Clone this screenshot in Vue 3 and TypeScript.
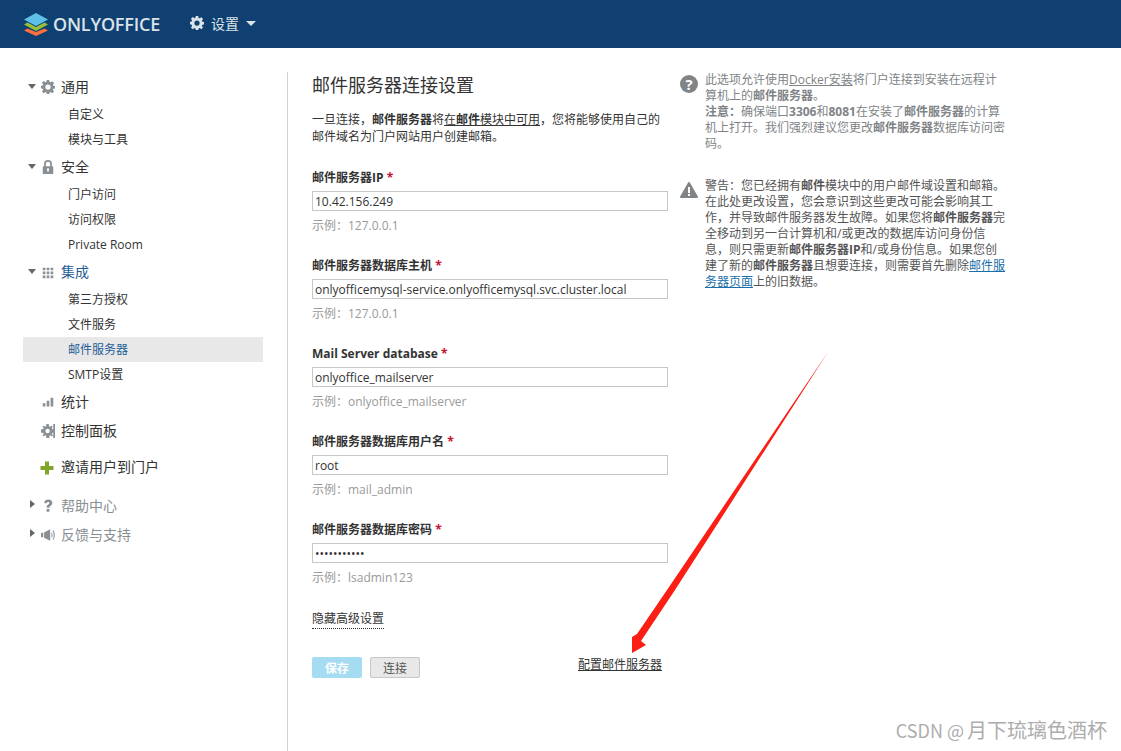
<script setup lang="ts">
interface NavItem {
  label: string
  icon: string
  arrow?: 'down' | 'right'
  blue?: boolean
  children?: { label: string; active?: boolean }[]
}

const nav: NavItem[] = [
  { label: '通用', icon: 'gear', arrow: 'down', children: [{ label: '自定义' }, { label: '模块与工具' }] },
  { label: '安全', icon: 'lock', arrow: 'down', children: [{ label: '门户访问' }, { label: '访问权限' }, { label: 'Private Room' }] },
  {
    label: '集成',
    icon: 'grid',
    arrow: 'down',
    blue: true,
    children: [{ label: '第三方授权' }, { label: '文件服务' }, { label: '邮件服务器', active: true }, { label: 'SMTP设置' }]
  },
  { label: '统计', icon: 'bars' },
  { label: '控制面板', icon: 'panel' }
]

const bottomNav: NavItem[] = [
  { label: '帮助中心', icon: 'help', arrow: 'right' },
  { label: '反馈与支持', icon: 'horn', arrow: 'right' }
]

const fields = [
  { label: '邮件服务器IP', value: '10.42.156.249', hint: '127.0.0.1', type: 'text' },
  { label: '邮件服务器数据库主机', value: 'onlyofficemysql-service.onlyofficemysql.svc.cluster.local', hint: '127.0.0.1', type: 'text' },
  { label: 'Mail Server database', value: 'onlyoffice_mailserver', hint: 'onlyoffice_mailserver', type: 'text' },
  { label: '邮件服务器数据库用户名', value: 'root', hint: 'mail_admin', type: 'text' },
  { label: '邮件服务器数据库密码', value: 'lsadmin1234', hint: 'lsadmin123', type: 'password' }
]
</script>

<template>
  <div class="page">
    <header class="top">
      <svg class="logo" width="26" height="23" viewBox="0 0 26 23">
        <path d="M4.500 15.500L13 19l8.500-3.500 3.500 2L13 23 1 17.500z" fill="#ff6f3d" />
        <path d="M4.500 9.500L13 14l8.500-4.500 3.500 2L13 18 1 11.500z" fill="#95c038" />
        <path d="M13 0l12 6.500L13 13 1 6.500z" fill="#5dc0e8" />
      </svg>
      <span class="brand">ONLYOFFICE</span>
      <div class="menu">
        <svg width="14" height="14" viewBox="0 0 16 16"><path fill="#dbe3ea" fill-rule="evenodd" d="M6.600 0h2.800l.4 2.200 1.200.5 1.900-1.300 2 2-1.300 1.900.5 1.200 2.200.4v2.800l-2.200.4-.5 1.200 1.300 1.800-2 2-1.900-1.300-1.200.5-.4 2.200H6.600l-.4-2.200-1.200-.5-1.900 1.300-2-2 1.300-1.800-.5-1.200L0 9.400V6.600l1.900-.4.5-1.200-1.300-1.800 2-2L5 2.500l1.200-.5zM8 5a3 3 0 100 6 3 3 0 000-6z" /></svg>
        <span>设置</span>
        <i class="caret"></i>
      </div>
    </header>

    <div class="body">
      <aside class="side">
        <template v-for="item in nav" :key="item.label">
          <div :class="['sec', { panel: item.icon === 'panel' }]">
            <i v-if="item.arrow" :class="['tri', item.arrow]"></i>
            <svg class="ico" width="14" height="14" viewBox="0 0 16 16" fill="#8a8f94">
              <path v-if="item.icon === 'gear'" fill-rule="evenodd" d="M6.600 0h2.800l.4 2.200 1.200.5 1.900-1.300 2 2-1.300 1.900.5 1.200 2.200.4v2.800l-2.200.4-.5 1.200 1.300 1.800-2 2-1.900-1.300-1.200.5-.4 2.200H6.600l-.4-2.200-1.200-.5-1.900 1.300-2-2 1.300-1.800-.5-1.200L0 9.400V6.600l1.900-.4.5-1.200-1.300-1.800 2-2L5 2.500l1.200-.5zM8 5a3 3 0 100 6 3 3 0 000-6z" />
              <path v-else-if="item.icon === 'lock'" fill-rule="evenodd" d="M8 0a4.500 4.500 0 014.500 4.500V7h.5a1 1 0 011 1v7a1 1 0 01-1 1H3a1 1 0 01-1-1V8a1 1 0 011-1h.5V4.500A4.500 4.500 0 018 0zm0 2a2.500 2.500 0 00-2.500 2.500V7h5V4.500A2.500 2.500 0 008 2zM7 9.500v3.500h2V9.500z" />
              <path v-else-if="item.icon === 'grid'" d="M2 3h3v3H2zM6.500 3h3v3h-3zM11 3h3v3h-3zM2 7.500h3v3H2zM6.500 7.500h3v3h-3zM11 7.500h3v3h-3zM2 12h3v3H2zM6.500 12h3v3h-3zM11 12h3v3h-3z" />
              <path v-else-if="item.icon === 'bars'" d="M2 9.500h3V13H2zM6.500 6.500h3V13h-3zM11 3h3v10h-3z" />
              <path v-else fill-rule="evenodd" d="M6 0h3v2.500l1.500.6 1.500-1.400 1.300 1.300L12.400 4.500l.6 1.500h1V0h2v16h-2v-6h-1l-.6 1.500 1.400 1.500-1.300 1.300-1.500-1.400-1.500.6V16H6v-2.500l-1.500-.6L3 14.300 1.700 13l1.400-1.500L2.500 10H0V6h2.500l.6-1.500L1.700 3 3 1.700l1.500 1.400L6 2.500zM7.500 5.500a2.500 2.500 0 100 5 2.500 2.500 0 000-5z" />
            </svg>
            <span :class="{ blue: item.blue }">{{ item.label }}</span>
          </div>
          <a
            v-for="sub in item.children"
            :key="sub.label"
            :class="['sub', { active: sub.active }]"
          >{{ sub.label }}</a>
        </template>

        <div class="sec invite">
          <svg class="plus" width="16" height="16" viewBox="0 0 16 16"><path fill="#7fa52b" d="M6 1.500h4V6h4.500v4H10v4.500H6V10H1.500V6H6z" /></svg>
          <span>邀请用户到门户</span>
        </div>

        <div class="lower">
          <div v-for="item in bottomNav" :key="item.label" class="sec muted">
            <i class="tri right"></i>
            <svg class="ico" width="14" height="14" viewBox="0 0 16 16" fill="#8a8f94">
              <path v-if="item.icon === 'help'" d="M3.500 4.500C4 1.800 5.800.5 8.300.5c2.800 0 4.700 1.500 4.700 3.800 0 1.800-.9 2.800-2.300 3.700-.9.600-1.100 1-1.100 2H6.500c0-1.800.4-2.800 1.700-3.600.9-.6 1.300-1 1.300-1.800 0-.8-.5-1.300-1.300-1.300-.9 0-1.500.6-1.700 1.500zM6.400 11.500h3.200v3.200H6.400z" />
              <path v-else d="M0 5.500h2.500v5H0zM3.500 5L10.500 1.500v13L3.500 11zM12 4.500c1.500 1 1.500 6 0 7zM14 2.500c2.300 2 2.300 9 0 11l-.8-.7c1.700-2 1.700-7.600 0-9.600z" />
            </svg>
            <span>{{ item.label }}</span>
          </div>
        </div>
      </aside>

      <main class="main">
        <h1>邮件服务器连接设置</h1>
        <p class="lead">一旦连接，<b>邮件服务器</b>将<u>在<b>邮件</b>模块中可用</u>，您将能够使用自己的邮件域名为门户网站用户创建邮箱。</p>

        <div v-for="f in fields" :key="f.label" class="field">
          <label>{{ f.label }} <em>*</em></label>
          <input :type="f.type" :value="f.value" readonly />
          <small>示例：{{ f.hint }}</small>
        </div>

        <div class="adv"><span>隐藏高级设置</span></div>

        <div class="actions">
          <button class="btn save">保存</button>
          <button class="btn connect">连接</button>
          <a class="config">配置邮件服务器</a>
        </div>
      </main>

      <section class="notes">
        <div class="note">
          <svg width="18" height="18" viewBox="0 0 18 18"><circle cx="9" cy="9" r="9" fill="#808487" /><text x="9" y="14.500" text-anchor="middle" class="glyph">?</text></svg>
          <p>此选项允许使用<u>Docker安装</u>将门户连接到安装在远程计算机上的<b>邮件服务器</b>。<br /><b>注意：</b>确保端口<b>3306</b>和<b>8081</b>在安装了<b>邮件服务器</b>的计算机上打开。我们强烈建议您更改<b>邮件服务器</b>数据库访问密码。</p>
        </div>
        <div class="note warn">
          <svg width="18" height="16" viewBox="0 0 18 16"><path d="M9 1l8 14H1z" fill="#808487" stroke="#808487" stroke-width="2" stroke-linejoin="round" /><path d="M8 5h2v6H8zM8 12h2v2H8z" fill="#fff" /></svg>
          <p>警告：您已经拥有<b>邮件</b>模块中的用户邮件域设置和邮箱。在此处更改设置，您会意识到这些更改可能会影响其工作，并导致邮件服务器发生故障。如果您将<b>邮件服务器</b>完全移动到另一台计算机和/或更改的数据库访问身份信息，则只需更新<b>邮件服务器IP</b>和/或身份信息。如果您创建了新的<b>邮件服务器</b>且想要连接，则需要首先删除<a>邮件服务器页面</a>上的旧数据。</p>
        </div>
      </section>
    </div>

    <svg class="arrow" width="1121" height="751" viewBox="0 0 1121 751">
      <path d="M828 352L667 590 637 634 632 637 632 653 646 645 641 641 675 590z" fill="#fa1e14" />
    </svg>
    <div class="mark">CSDN @<span>月下琉璃色酒杯</span></div>
  </div>
</template>

<style>
html, body { margin: 0; background: #fff; }
</style>

<style scoped>
* { box-sizing: border-box; }

.page {
  position: relative;
  width: 1121px;
  height: 751px;
  overflow: hidden;
  font-family: "Open Sans", "Noto Sans CJK SC", sans-serif;
  font-size: 12px;
  color: #333;
}

.top {
  height: 48px;
  background: #0f4071;
  display: flex;
  align-items: center;
  padding-left: 23px;
  color: #dbe3ea;
}
.brand { margin-left: 4px; font-size: 18px; font-weight: 600; letter-spacing: -0.2px; width: 110px; }
.menu { margin-left: 27px; display: flex; align-items: center; gap: 7px; font-size: 14px; padding-bottom: 2px; }
.caret { border: 5px solid transparent; border-top-color: #dbe3ea; border-bottom: 0; }

.body { display: flex; height: 703px; }

.side { width: 264px; margin-left: 23px; padding-top: 24px; font-size: 14px; }
.sec { position: relative; height: 30px; display: flex; align-items: center; padding: 0 0 2px 38px; color: #333; }
.sec .ico { position: absolute; left: 18px; top: 8px; }
.plus { position: absolute; left: 16px; top: 8px; }
.tri { position: absolute; width: 0; height: 0; border: 4px solid transparent; }
.tri.down { left: 5px; top: 12px; border-top: 5px solid #666; border-bottom: 0; }
.tri.right { left: 7px; top: 9px; border-left: 5px solid #666; border-right: 0; }
.blue { color: #1f5c96; }
.sub { display: block; width: 240px; height: 25px; line-height: 26px; padding-left: 45px; font-size: 12px; color: #333; }
.sub.active { background: #e8e8e8; color: #1f5c96; }
.panel { margin-top: -1px; }
.invite { margin-top: 6px; }
.lower { margin-top: 9px; }
.muted { height: 29px; color: #8a8f94; }

.main {
  width: 418px;
  margin-top: 24px;
  padding-left: 24px;
  border-left: 1px solid #d1d1d1;
}
h1 { margin: 0; font-size: 18px; font-weight: 400; line-height: 26px; }
.lead { margin: 13px 0 0; width: 352px; line-height: 17px; }
.field { margin-top: 24px; width: 356px; }
.lead + .field { margin-top: 25px; }
.field label { display: block; font-weight: 700; line-height: 16px; }
.field em { color: #c8102e; font-style: normal; }
.field input {
  display: block;
  width: 100%;
  height: 20px;
  margin-top: 5px;
  padding: 0 2px;
  border: 1px solid #c7c7c7;
  font: inherit;
  color: #333;
  outline: none;
}
.field small { display: block; margin-top: 7px; font-size: 12px; line-height: 16px; color: #9a9a9a; }
.adv { margin-top: 25px; line-height: 16px; }
.adv span { display: inline-block; border-bottom: 1px dotted #333; padding-bottom: 1px; }
.actions { display: flex; gap: 8px; margin-top: 28px; width: 356px; }
.btn { width: 50px; height: 21px; padding: 0; border-radius: 2px; font: inherit; }
.save { border: 0; background: #a6dcf2; color: #fff; font-weight: 600; }
.connect { border: 1px solid #c7c7c7; background: #e8e8e8; color: #555; }
.config { margin-left: auto; margin-right: 6px; align-self: flex-start; line-height: 16px; text-decoration: underline; color: #333; }

.notes { width: 334px; margin-top: 24px; margin-left: -25px; color: #808487; line-height: 16px; }
.note { display: flex; gap: 7px; }
.note svg { flex: none; margin-top: 3px; }
.note p { margin: 0; width: 302px; }
.note b { font-weight: 700; }
.warn { margin-top: 26px; color: #555; }
.warn svg { margin-top: 4px; }
.warn a { color: #1a6fa8; text-decoration: underline; }
.glyph { fill: #fff; font-size: 15px; font-weight: 700; font-family: "Open Sans", sans-serif; }

.arrow { position: absolute; left: 0; top: 0; pointer-events: none; }
.mark {
  position: absolute;
  right: 14px;
  bottom: 7px;
  font-size: 18px;
  color: #adadad;
  font-family: "Noto Sans CJK SC", sans-serif;
}
.mark span { margin-left: 3px; font-size: 20px; }
</style>
